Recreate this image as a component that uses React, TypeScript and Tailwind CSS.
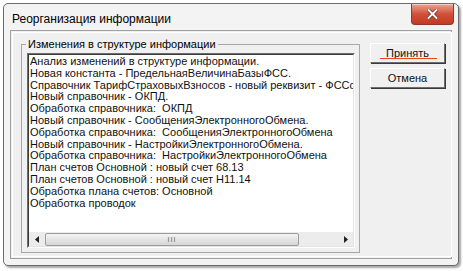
import React from 'react';

const lines = [
  'Анализ изменений в структуре информации.',
  'Новая константа - ПредельнаяВеличинаБазыФСС.',
  'Справочник ТарифСтраховыхВзносов - новый реквизит - ФССсИнвалидов',
  'Новый справочник - ОКПД.',
  'Обработка справочника:  ОКПД',
  'Новый справочник - СообщенияЭлектронногоОбмена.',
  'Обработка справочника:  СообщенияЭлектронногоОбмена',
  'Новый справочник - НастройкиЭлектронногоОбмена.',
  'Обработка справочника:  НастройкиЭлектронногоОбмена',
  'План счетов Основной : новый счет 68.13',
  'План счетов Основной : новый счет Н11.14',
  'Обработка плана счетов: Основной',
  'Обработка проводок',
];

function Button({ label, focused = false }: { label: string; focused?: boolean }) {
  return (
    <div className="relative flex h-[20px] w-[75px] items-center justify-center border border-t-[#ffffff] border-l-[#ffffff] border-r-[#6d6d6d] border-b-[#6d6d6d] bg-[#f0f0f0] shadow-[1px_1px_0_#3a3a3a] text-[11px] text-[#111]">
      <span>{label}</span>
      {focused && <div className="absolute bottom-[3px] left-[9px] h-[1px] w-[57px] bg-[#e8451e]" />}
    </div>
  );
}

export default function App() {
  return (
    <div
      className="h-[271px] w-[463px] overflow-hidden bg-white pl-[3px] pt-[3px]"
      style={{ fontFamily: '"Liberation Sans", Arial, sans-serif' }}
    >
      <div className="flex h-[263px] w-[456px] flex-col rounded-[5px] border border-[#6b6b6b] bg-[#f3f3f3] shadow-[2px_2px_2px_rgba(0,0,0,0.35)]">
        {/* title bar */}
        <div className="flex h-[26px] items-start justify-between pl-[8px] pr-[4px]">
          <span className="mt-[8px] text-[12px] leading-[14px] text-black">Реорганизация информации</span>
          <div className="flex h-[21px] w-[43px] items-center justify-center rounded-b-[4px] border border-t-0 border-[#8a3a2e] bg-gradient-to-b from-[#e9a493] via-[#d0503a] to-[#c23a22] shadow-[inset_0_1px_0_rgba(255,255,255,0.5)]">
            <svg width="11" height="10" viewBox="0 0 11 10">
              <path d="M1.5 1 L9.5 9 M9.5 1 L1.5 9" stroke="#5a1a10" strokeWidth="3.2" strokeLinecap="square" />
              <path d="M1.5 1 L9.5 9 M9.5 1 L1.5 9" stroke="#ffffff" strokeWidth="2" strokeLinecap="square" />
            </svg>
          </div>
        </div>
        {/* client area */}
        <div className="mx-[6px] mb-[6px] flex flex-1 border border-[#a0a0a0] bg-[#f0f0f0] p-[1px]">
          <div className="flex flex-1 border border-white pt-[11px] pl-[8px] pr-[6px] pb-[3px]">
            {/* group box */}
            <div className="relative flex w-[339px] shrink-0 border border-[#a8a8a8] pl-[5px] pr-[4px] pt-[8px] pb-[4px]">
              <span className="absolute -top-[7px] left-[4px] bg-[#f0f0f0] px-[2px] text-[11px] leading-[13px] text-black">
                Изменения в структуре информации
              </span>
              <div className="flex min-w-0 flex-1 flex-col overflow-hidden border border-t-[#6d6d6d] border-l-[#6d6d6d] border-r-white border-b-white">
                <div className="flex min-w-0 flex-1 flex-col overflow-hidden border border-t-[#3a3a3a] border-l-[#3a3a3a] border-r-[#e3e3e3] border-b-[#e3e3e3] bg-white">
                  <div className="min-w-0 flex-1 overflow-hidden pl-[1px] pt-[1px]">
                    {lines.map((l) => (
                      <div key={l} className="overflow-hidden whitespace-pre text-[11px] leading-[11.8px] text-[#111]">{l}</div>
                    ))}
                  </div>
                  {/* horizontal scrollbar */}
                  <div className="flex h-[14px] shrink-0 items-center bg-[#ececec]">
                    <div className="flex h-full w-[16px] items-center justify-center">
                      <svg width="4" height="7" viewBox="0 0 4 7"><path d="M4 0 L0 3.5 L4 7 Z" fill="#222" /></svg>
                    </div>
                    <div className="flex h-[13px] w-[254px] items-center justify-center rounded-[2px] border border-[#9c9c9c] bg-gradient-to-b from-[#f4f4f4] to-[#d6d6d6]">
                      <span className="text-[7px] leading-[7px] tracking-[1px] text-[#666]">III</span>
                    </div>
                    <div className="flex-1" />
                    <div className="flex h-full w-[14px] items-center justify-center">
                      <svg width="4" height="7" viewBox="0 0 4 7"><path d="M0 0 L4 3.5 L0 7 Z" fill="#222" /></svg>
                    </div>
                  </div>
                </div>
              </div>
            </div>
            {/* buttons */}
            <div className="-mt-[1px] ml-[10px] flex flex-col gap-[5px]">
              <Button label="Принять" focused />
              <Button label="Отмена" />
            </div>
          </div>
        </div>
      </div>
    </div>
  );
}
